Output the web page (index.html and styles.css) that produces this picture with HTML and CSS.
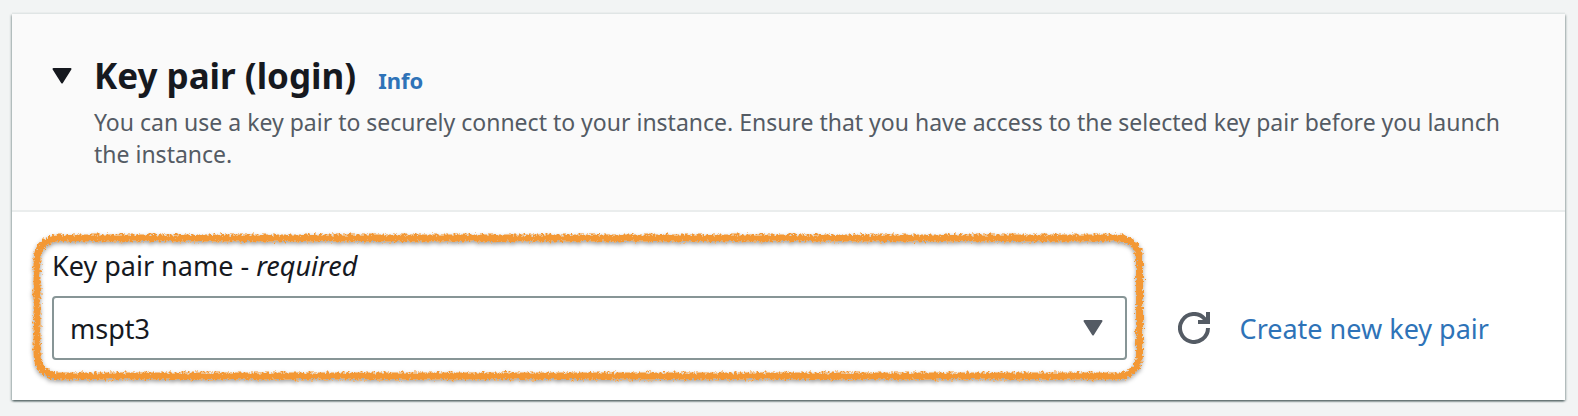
FILE: index.html
```html
<!DOCTYPE html>
<html lang="en">
<head>
<meta charset="utf-8">
<meta name="viewport" content="width=device-width, initial-scale=1">
<title>Key pair (login)</title>
<link rel="stylesheet" href="styles.css">
</head>
<body>
<section class="card">
  <header class="card-header">
    <button class="toggle" type="button" aria-label="Collapse section" aria-expanded="true">
      <svg class="caret" viewBox="0 0 20 16" aria-hidden="true"><path d="M1.5 1h17L10 14.5z"/></svg>
    </button>
    <div class="heading">
      <div class="title-row">
        <h2 class="title">Key pair (login)</h2>
        <a class="info" href="#">Info</a>
      </div>
      <p class="description">You can use a key pair to securely connect to your instance. Ensure that you have access to the selected key pair before you launch the instance.</p>
    </div>
  </header>
  <div class="card-body">
    <div class="field">
      <label class="label" for="key-pair">Key pair name - <em>required</em></label>
      <div class="select-wrap">
        <select class="select" id="key-pair"><option>mspt3</option></select>
        <svg class="caret select-caret" viewBox="0 0 20 16" aria-hidden="true"><path d="M1.5 1h17L10 14.5z"/></svg>
      </div>
      <svg class="highlight" aria-hidden="true">
        <defs>
          <filter id="chalk" filterUnits="userSpaceOnUse" x="0" y="0" width="100%" height="100%">
            <feTurbulence type="fractalNoise" baseFrequency="0.4" numOctaves="3" seed="4" result="noise"/>
            <feDisplacementMap in="SourceGraphic" in2="noise" scale="7" xChannelSelector="R" yChannelSelector="G" result="rough"/>
            <feDropShadow in="rough" dx="0" dy="2" stdDeviation="2" flood-color="#000" flood-opacity="0.4"/>
          </filter>
        </defs>
        <g filter="url(#chalk)"><rect class="highlight-line" x="10" y="10" rx="21"/></g>
      </svg>
    </div>
    <div class="actions">
      <button class="refresh" type="button" aria-label="Refresh key pairs">
        <svg class="refresh-icon" viewBox="0 0 32 32" aria-hidden="true">
          <path d="M30 16A14 14 0 1 1 26.500 6.700L29 10M30 0v10H20"/>
        </svg>
      </button>
      <a class="create" href="#">Create new key pair</a>
    </div>
  </div>
</section>
</body>
</html>
```
FILE: styles.css
```css
* {
  box-sizing: border-box;
}

body {
  margin: 0;
  padding: 14px 13px 16px 12px;
  background: #f2f4f4;
  color: #16191f;
  font-family: "Noto Sans", "Open Sans", sans-serif;
}

.card {
  background: #fff;
  box-shadow: 0 2px 2px -1px #4b5b5b, 1px 1px 2px #a5b0b0, -1px 1px 2px #a5b0b0, 0 -2px 0 #eaeded;
}

.card-header {
  display: flex;
  gap: 22px;
  padding: 34px 40px 40px;
  min-height: 198px;
  background: #fafafa;
  border-bottom: 2px solid #eaeded;
}

.toggle,
.refresh {
  display: flex;
  padding: 0;
  border: 0;
  background: none;
  cursor: pointer;
}

.toggle {
  padding-top: 20px;
  color: #16191f;
  align-self: flex-start;
}

.caret {
  width: 20px;
  height: 16px;
  fill: currentColor;
  stroke: currentColor;
  stroke-width: 2;
  stroke-linejoin: round;
}

.heading {
  flex: 1;
  min-width: 0;
}

.title-row {
  display: flex;
  align-items: baseline;
  gap: 22px;
  margin-bottom: 2px;
}

.title {
  margin: 0;
  font-size: 35px;
  line-height: 56px;
  font-weight: 700;
}

.info {
  color: #2e73b8;
  font-size: 22px;
  font-weight: 700;
  text-decoration: none;
}

.description {
  margin: 0;
  color: #545b64;
  font-size: 23px;
  line-height: 32px;
}

.card-body {
  display: flex;
  align-items: flex-end;
  gap: 51px;
  padding: 35px 76px 40px 40px;
}

.field {
  position: relative;
  flex: 1;
  min-width: 0;
}

.label {
  display: block;
  margin-bottom: 11px;
  font-size: 27px;
  line-height: 38px;
}

.select-wrap {
  position: relative;
}

.select {
  display: block;
  width: 100%;
  height: 64px;
  padding: 0 56px 0 16px;
  border: 2px solid #879596;
  border-radius: 4px;
  appearance: none;
  background: #fff;
  color: #16191f;
  font-family: inherit;
  font-size: 27px;
}

.select-caret {
  position: absolute;
  top: 24px;
  right: 24px;
  color: #545b64;
  pointer-events: none;
}

.highlight {
  position: absolute;
  top: -19px;
  left: -25px;
  width: calc(100% + 48px);
  height: calc(100% + 51px);
  pointer-events: none;
}

.highlight-line {
  width: calc(100% - 20px);
  height: calc(100% - 26px);
  fill: none;
  stroke: #f39834;
  stroke-width: 7;
}

.actions {
  display: flex;
  align-items: center;
  gap: 30px;
  height: 64px;
}

.refresh-icon {
  width: 32px;
  height: 32px;
  fill: none;
  stroke: #545b64;
  stroke-width: 4;
}

.create {
  color: #2e73b8;
  font-size: 27px;
  text-decoration: none;
  white-space: nowrap;
}
```
